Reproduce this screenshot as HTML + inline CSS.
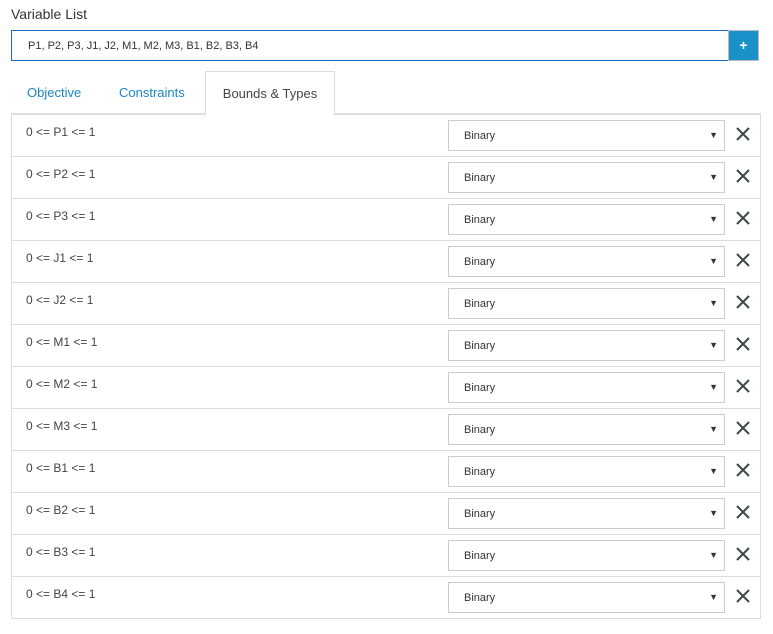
<!DOCTYPE html><html><head><style>
body{margin:0;width:773px;height:634px;background:#fff;font-family:"Liberation Sans",sans-serif;position:relative;overflow:hidden}
.abs{position:absolute}
.lbl{left:11px;top:6px;font-size:14px;color:#333}
.inp{left:11px;top:30px;width:716px;height:29px;border:1px solid #1a6ac4;font-size:11px;color:#333;line-height:31px;box-sizing:content-box}
.inp span{margin-left:16px}
.btn{left:728px;top:30px;width:31px;height:31px;background:#1b91c9;border:1px solid #bbb;box-sizing:border-box;color:#fff;font-weight:bold;font-size:14px;text-align:center;line-height:28px}
.tab{top:71px;height:43px;line-height:43px;font-size:13px;color:#1b86c4}
.act{left:205px;width:128px;border:1px solid #ddd;border-bottom:none;background:#fff;color:#444;text-align:center;z-index:2}
.tbl{left:11px;top:113px;width:748px;border:1px solid #ddd;border-top:2px solid #ddd}
.row{height:41px;border-bottom:1px solid #ddd;position:relative;font-size:12px;color:#444}
.row:last-child{border-bottom:none}
.row .t{position:absolute;left:14px;top:10px}
.sel{position:absolute;left:436px;top:5px;width:275px;height:29px;border:1px solid #ccc;font-size:11px;line-height:31px;color:#333}
.sel span{margin-left:15px}
.sel i{position:absolute;right:6px;top:-1px;font-style:normal;font-size:9px}
.x{position:absolute;left:724px;top:12px}
</style></head><body>
<div class="abs lbl">Variable List</div>
<div class="abs inp"><span>P1, P2, P3, J1, J2, M1, M2, M3, B1, B2, B3, B4</span></div>
<div class="abs btn">+</div>
<div class="abs tab" style="left:27px">Objective</div>
<div class="abs tab" style="left:119px">Constraints</div>
<div class="abs tab act">Bounds &amp; Types</div>
<div class="abs tbl">
<div class="row"><span class="t">0 &lt;= P1 &lt;= 1</span><div class="sel"><span>Binary</span><i>▼</i></div><svg class="x" width="14" height="14"><path d="M1 1L13 13M13 1L1 13" stroke="#3d4a48" stroke-width="2"/></svg></div>
<div class="row"><span class="t">0 &lt;= P2 &lt;= 1</span><div class="sel"><span>Binary</span><i>▼</i></div><svg class="x" width="14" height="14"><path d="M1 1L13 13M13 1L1 13" stroke="#3d4a48" stroke-width="2"/></svg></div>
<div class="row"><span class="t">0 &lt;= P3 &lt;= 1</span><div class="sel"><span>Binary</span><i>▼</i></div><svg class="x" width="14" height="14"><path d="M1 1L13 13M13 1L1 13" stroke="#3d4a48" stroke-width="2"/></svg></div>
<div class="row"><span class="t">0 &lt;= J1 &lt;= 1</span><div class="sel"><span>Binary</span><i>▼</i></div><svg class="x" width="14" height="14"><path d="M1 1L13 13M13 1L1 13" stroke="#3d4a48" stroke-width="2"/></svg></div>
<div class="row"><span class="t">0 &lt;= J2 &lt;= 1</span><div class="sel"><span>Binary</span><i>▼</i></div><svg class="x" width="14" height="14"><path d="M1 1L13 13M13 1L1 13" stroke="#3d4a48" stroke-width="2"/></svg></div>
<div class="row"><span class="t">0 &lt;= M1 &lt;= 1</span><div class="sel"><span>Binary</span><i>▼</i></div><svg class="x" width="14" height="14"><path d="M1 1L13 13M13 1L1 13" stroke="#3d4a48" stroke-width="2"/></svg></div>
<div class="row"><span class="t">0 &lt;= M2 &lt;= 1</span><div class="sel"><span>Binary</span><i>▼</i></div><svg class="x" width="14" height="14"><path d="M1 1L13 13M13 1L1 13" stroke="#3d4a48" stroke-width="2"/></svg></div>
<div class="row"><span class="t">0 &lt;= M3 &lt;= 1</span><div class="sel"><span>Binary</span><i>▼</i></div><svg class="x" width="14" height="14"><path d="M1 1L13 13M13 1L1 13" stroke="#3d4a48" stroke-width="2"/></svg></div>
<div class="row"><span class="t">0 &lt;= B1 &lt;= 1</span><div class="sel"><span>Binary</span><i>▼</i></div><svg class="x" width="14" height="14"><path d="M1 1L13 13M13 1L1 13" stroke="#3d4a48" stroke-width="2"/></svg></div>
<div class="row"><span class="t">0 &lt;= B2 &lt;= 1</span><div class="sel"><span>Binary</span><i>▼</i></div><svg class="x" width="14" height="14"><path d="M1 1L13 13M13 1L1 13" stroke="#3d4a48" stroke-width="2"/></svg></div>
<div class="row"><span class="t">0 &lt;= B3 &lt;= 1</span><div class="sel"><span>Binary</span><i>▼</i></div><svg class="x" width="14" height="14"><path d="M1 1L13 13M13 1L1 13" stroke="#3d4a48" stroke-width="2"/></svg></div>
<div class="row"><span class="t">0 &lt;= B4 &lt;= 1</span><div class="sel"><span>Binary</span><i>▼</i></div><svg class="x" width="14" height="14"><path d="M1 1L13 13M13 1L1 13" stroke="#3d4a48" stroke-width="2"/></svg></div>
</div>
</body></html>
